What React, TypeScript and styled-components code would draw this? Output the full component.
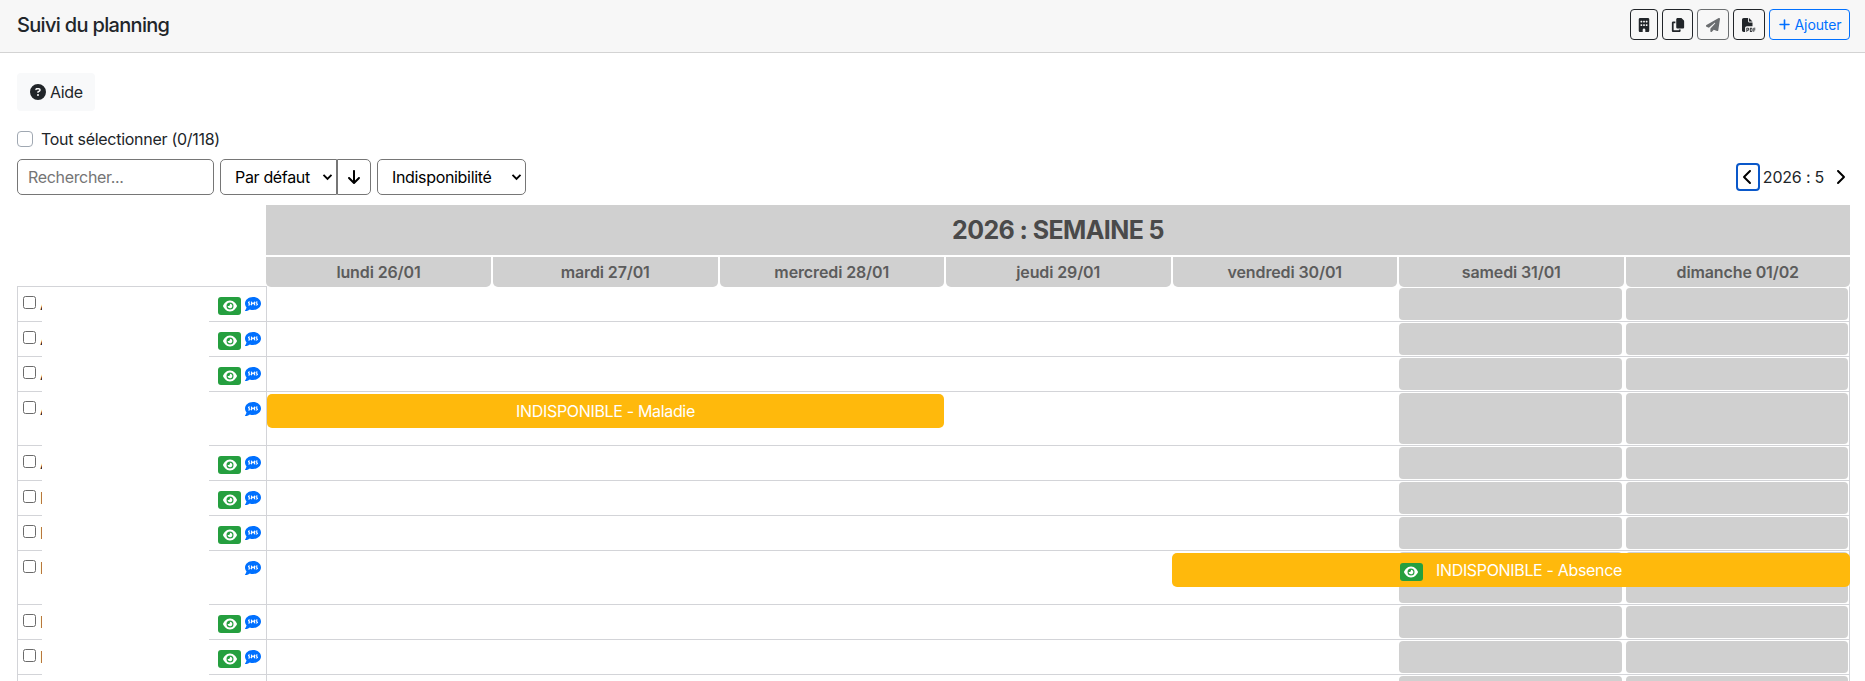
import React from 'react';
import styled, { createGlobalStyle, css } from 'styled-components';
import {
  FaBuilding,
  FaCopy,
  FaPaperPlane,
  FaFilePdf,
  FaPlus,
  FaCircleQuestion,
  FaArrowDown,
  FaChevronLeft,
  FaChevronRight,
  FaEye,
  FaCommentSms,
} from 'react-icons/fa6';

const GRAY = '#d0d0d0';
const LINE = '#d3d4d8';
const BLUE = '#0070ff';

const Global = createGlobalStyle`
  *, *::before, *::after { box-sizing: border-box; }
  body {
    margin: 0;
    height: 681px;
    overflow: hidden;
    background: #fff;
    color: #212529;
    font: 400 16px/24px Inter, "Liberation Sans", sans-serif;
    letter-spacing: -0.33px;
  }
  button, input { font: inherit; letter-spacing: inherit; }
  svg { display: block; flex: none; }
`;

const Page = styled.div`
  height: 681px;
  overflow: hidden;
`;

const Header = styled.header`
  display: flex;
  justify-content: space-between;
  align-items: flex-start;
  height: 53px;
  padding: 9px 15px 0 17px;
  background: #f7f7f7;
  border-bottom: 1px solid #d3d3d3;
`;

const Title = styled.h1`
  margin: 0;
  font-size: 20px;
  font-weight: 500;
  line-height: 32px;
  letter-spacing: -0.68px;
`;

const Actions = styled.div`
  display: flex;
  gap: 4px;
`;

const ActionButton = styled.button<{ $width: number; $color?: string; $faded?: boolean }>`
  display: flex;
  align-items: center;
  justify-content: center;
  gap: 4px;
  width: ${(p) => p.$width}px;
  height: 31px;
  padding: 0;
  border: 1px solid ${(p) => p.$color || '#212529'};
  border-radius: 4px;
  background: transparent;
  color: ${(p) => p.$color || '#212529'};
  font-size: 14px;
  letter-spacing: -0.1px;
  opacity: ${(p) => (p.$faded ? 0.65 : 1)};
`;

const Content = styled.main`
  display: flex;
  flex-direction: column;
  align-items: flex-start;
  padding: 20px 15px 0 17px;
`;

const HelpButton = styled.button`
  display: flex;
  align-items: center;
  gap: 4px;
  width: 78px;
  height: 38px;
  padding: 0 0 0 13px;
  border: 0;
  border-radius: 4px;
  background: #f8f9fa;
  color: #212529;
`;

const SelectAll = styled.label`
  display: flex;
  align-items: center;
  gap: 8px;
  height: 24px;
  margin-top: 16px;
  letter-spacing: -0.28px;
`;

const Check = styled.input.attrs({ type: 'checkbox' })<{ $size: number }>`
  appearance: none;
  flex: none;
  width: ${(p) => p.$size}px;
  height: ${(p) => p.$size}px;
  margin: 0;
  border: 1px solid ${(p) => (p.$size > 14 ? '#a0a8b2' : '#6b6b6b')};
  border-radius: ${(p) => (p.$size > 14 ? 4 : 2.5)}px;
  background: #fff;
`;

const Toolbar = styled.div`
  display: flex;
  align-items: center;
  width: 100%;
  height: 36px;
  margin-top: 8px;
`;

const field = css`
  height: 36px;
  border: 1px solid #767676;
  background: #fff;
  color: #000;
`;

const Search = styled.input`
  ${field}
  width: 197px;
  margin-right: 6px;
  padding: 0 10px;
  border-radius: 5px;
  &::placeholder { color: #757575; opacity: 1; }
`;

const Select = styled.button<{ $width: number; $joined?: boolean }>`
  ${field}
  display: flex;
  align-items: center;
  justify-content: space-between;
  width: ${(p) => p.$width}px;
  padding: 0 3px 0 14px;
  border-radius: ${(p) => (p.$joined ? '5px 0 0 5px' : '5px')};
`;

const SortButton = styled.button`
  ${field}
  display: flex;
  align-items: center;
  justify-content: center;
  width: 34px;
  margin-right: 6px;
  padding: 0;
  border-radius: 0 5px 5px 0;
`;

const WeekNav = styled.div`
  display: flex;
  align-items: center;
  margin-left: auto;
`;

const NavButton = styled.button<{ $focused?: boolean }>`
  display: flex;
  align-items: center;
  justify-content: center;
  width: ${(p) => (p.$focused ? 24 : 20)}px;
  height: 28px;
  padding: 0;
  border: ${(p) => (p.$focused ? '2px solid #0a58ca' : '0')};
  border-radius: 4px;
  background: #fff;
  color: #000;
`;

const WeekLabel = styled.span`
  width: 70px;
  padding-right: 3px;
  text-align: center;
  letter-spacing: -0.2px;
`;

const Planning = styled.section`
  width: 100%;
  margin-top: 10px;
`;

const WeekHead = styled.div`
  display: flex;
  flex-direction: column;
  gap: 2px;
  margin-left: 249px;
`;

const WeekTitle = styled.div`
  height: 50px;
  background: ${GRAY};
  color: #4a4a4a;
  font-size: 25px;
  font-weight: 700;
  line-height: 50px;
  text-align: center;
  letter-spacing: -0.6px;
`;

const Days = styled.div`
  display: grid;
  grid-template-columns: 225px repeat(6, 1fr);
  gap: 2px;
`;

const Day = styled.div`
  height: 30px;
  border-radius: 0 0 5px 5px;
  background: ${GRAY};
  color: #5c5c5c;
  font-weight: 600;
  line-height: 30px;
  text-align: center;
  letter-spacing: -0.12px;
`;

const Rows = styled.div`
  width: 1833px;
  margin-top: -1px;
  border-left: 1px solid ${LINE};
`;

const Row = styled.div<{ $height: number }>`
  display: flex;
  height: ${(p) => p.$height}px;
`;

const Person = styled.div`
  display: flex;
  width: 249px;
  border-right: 1px solid ${LINE};
`;

const PersonStart = styled.div`
  display: flex;
  width: 24px;
  gap: 4px;
  padding: 9px 0 0 5px;
  border-top: 1px solid ${LINE};
  overflow: hidden;
`;

const Initial = styled.span`
  height: 16px;
  line-height: 16px;
  color: #212529;
`;

const PersonGap = styled.div<{ $first: boolean }>`
  width: 167px;
  border-top: 1px solid ${(p) => (p.$first ? LINE : 'transparent')};
`;

const PersonTools = styled.div`
  display: flex;
  flex: 1;
  justify-content: flex-end;
  align-items: flex-start;
  gap: 4px;
  padding: 9px 5px 0 0;
  border-top: 1px solid ${LINE};
  color: ${BLUE};
`;

const EyeBadge = styled.span`
  display: flex;
  align-items: center;
  justify-content: center;
  flex: none;
  width: 23px;
  height: 18px;
  border-radius: 3px;
  background: #259f3f;
  color: #fff;
`;

const Track = styled.div<{ $first: boolean }>`
  position: relative;
  display: grid;
  grid-template-columns: repeat(7, 1fr);
  flex: 1;
  border-top: 1px solid ${(p) => (p.$first ? 'transparent' : LINE)};
  border-right: 1px solid ${LINE};
`;

const WeekendCell = styled.div<{ $col: number }>`
  grid-column: ${(p) => p.$col};
  grid-row: 1;
  margin: 1px 1px 1px ${(p) => (p.$col === 7 ? 3 : 2)}px;
  border-radius: 4px;
  background: ${GRAY};
`;

const Absence = styled.div<{ $from: number; $to: number }>`
  position: absolute;
  top: 2px;
  left: calc(100% / 7 * ${(p) => p.$from} + ${(p) => (p.$from ? 1 : 0)}px);
  right: calc(100% / 7 * ${(p) => 7 - p.$to} + ${(p) => (p.$to === 7 ? -1 : 1)}px);
  display: flex;
  align-items: center;
  justify-content: center;
  gap: 13px;
  height: 34px;
  border-radius: 5px;
  background: #ffb90c;
  color: #fff;
`;

const BadgeSlot = styled.span<{ $top: number }>`
  padding-top: ${(p) => p.$top}px;
`;

type Entry = { initial: string; eye?: boolean; absence?: { label: string; from: number; to: number; eye?: boolean } };

const days = ['lundi 26/01', 'mardi 27/01', 'mercredi 28/01', 'jeudi 29/01', 'vendredi 30/01', 'samedi 31/01', 'dimanche 01/02'];

const entries: Entry[] = [
  { initial: 'A', eye: true },
  { initial: 'A', eye: true },
  { initial: 'A', eye: true },
  { initial: 'A', absence: { label: 'INDISPONIBLE - Maladie', from: 0, to: 3 } },
  { initial: 'A', eye: true },
  { initial: 'B', eye: true },
  { initial: 'B', eye: true },
  { initial: 'B', absence: { label: 'INDISPONIBLE - Absence', from: 4, to: 7, eye: true } },
  { initial: 'B', eye: true },
  { initial: 'B', eye: true },
  { initial: 'B', eye: true },
];

const Caret = () => (
  <svg width="11" height="8" viewBox="0 0 11 8" fill="none" stroke="#000" strokeWidth="1.9">
    <path d="M1.5 1.8 5.5 5.8 9.5 1.8" />
  </svg>
);

const Eye = ({ top }: { top: number }) => (
  <BadgeSlot $top={top}>
    <EyeBadge>
      <FaEye size={14} />
    </EyeBadge>
  </BadgeSlot>
);

const PlanningRow = ({ entry, first }: { entry: Entry; first: boolean }) => (
  <Row $height={entry.absence ? 54 : 35}>
    <Person>
      <PersonStart>
        <Check $size={13} />
        <Initial>{entry.initial}</Initial>
      </PersonStart>
      <PersonGap $first={first} />
      <PersonTools>
        {entry.eye && <Eye top={1} />}
        <FaCommentSms size={16} />
      </PersonTools>
    </Person>
    <Track $first={first}>
      <WeekendCell $col={6} />
      <WeekendCell $col={7} />
      {entry.absence && (
        <Absence $from={entry.absence.from} $to={entry.absence.to}>
          {entry.absence.eye && <Eye top={3} />}
          <span>{entry.absence.label}</span>
        </Absence>
      )}
    </Track>
  </Row>
);

export default function App() {
  return (
    <Page>
      <Global />
      <Header>
        <Title>Suivi du planning</Title>
        <Actions>
          <ActionButton $width={28}><FaBuilding size={14} /></ActionButton>
          <ActionButton $width={31}><FaCopy size={14} /></ActionButton>
          <ActionButton $width={32} $faded><FaPaperPlane size={14} /></ActionButton>
          <ActionButton $width={32}><FaFilePdf size={14} /></ActionButton>
          <ActionButton $width={81} $color={BLUE}>
            <FaPlus size={13} />
            Ajouter
          </ActionButton>
        </Actions>
      </Header>
      <Content>
        <HelpButton>
          <FaCircleQuestion size={16} />
          Aide
        </HelpButton>
        <SelectAll>
          <Check $size={16} />
          Tout sélectionner (0/118)
        </SelectAll>
        <Toolbar>
          <Search placeholder="Rechercher..." />
          <Select $width={117} $joined>
            Par défaut
            <Caret />
          </Select>
          <SortButton>
            <FaArrowDown size={16} />
          </SortButton>
          <Select $width={149}>
            Indisponibilité
            <Caret />
          </Select>
          <WeekNav>
            <NavButton $focused><FaChevronLeft size={16} /></NavButton>
            <WeekLabel>2026 : 5</WeekLabel>
            <NavButton><FaChevronRight size={16} /></NavButton>
          </WeekNav>
        </Toolbar>
        <Planning>
          <WeekHead>
            <WeekTitle>2026 : SEMAINE 5</WeekTitle>
            <Days>
              {days.map((d) => (
                <Day key={d}>{d}</Day>
              ))}
            </Days>
          </WeekHead>
          <Rows>
            {entries.map((e, i) => (
              <PlanningRow key={i} entry={e} first={i === 0} />
            ))}
          </Rows>
        </Planning>
      </Content>
    </Page>
  );
}
